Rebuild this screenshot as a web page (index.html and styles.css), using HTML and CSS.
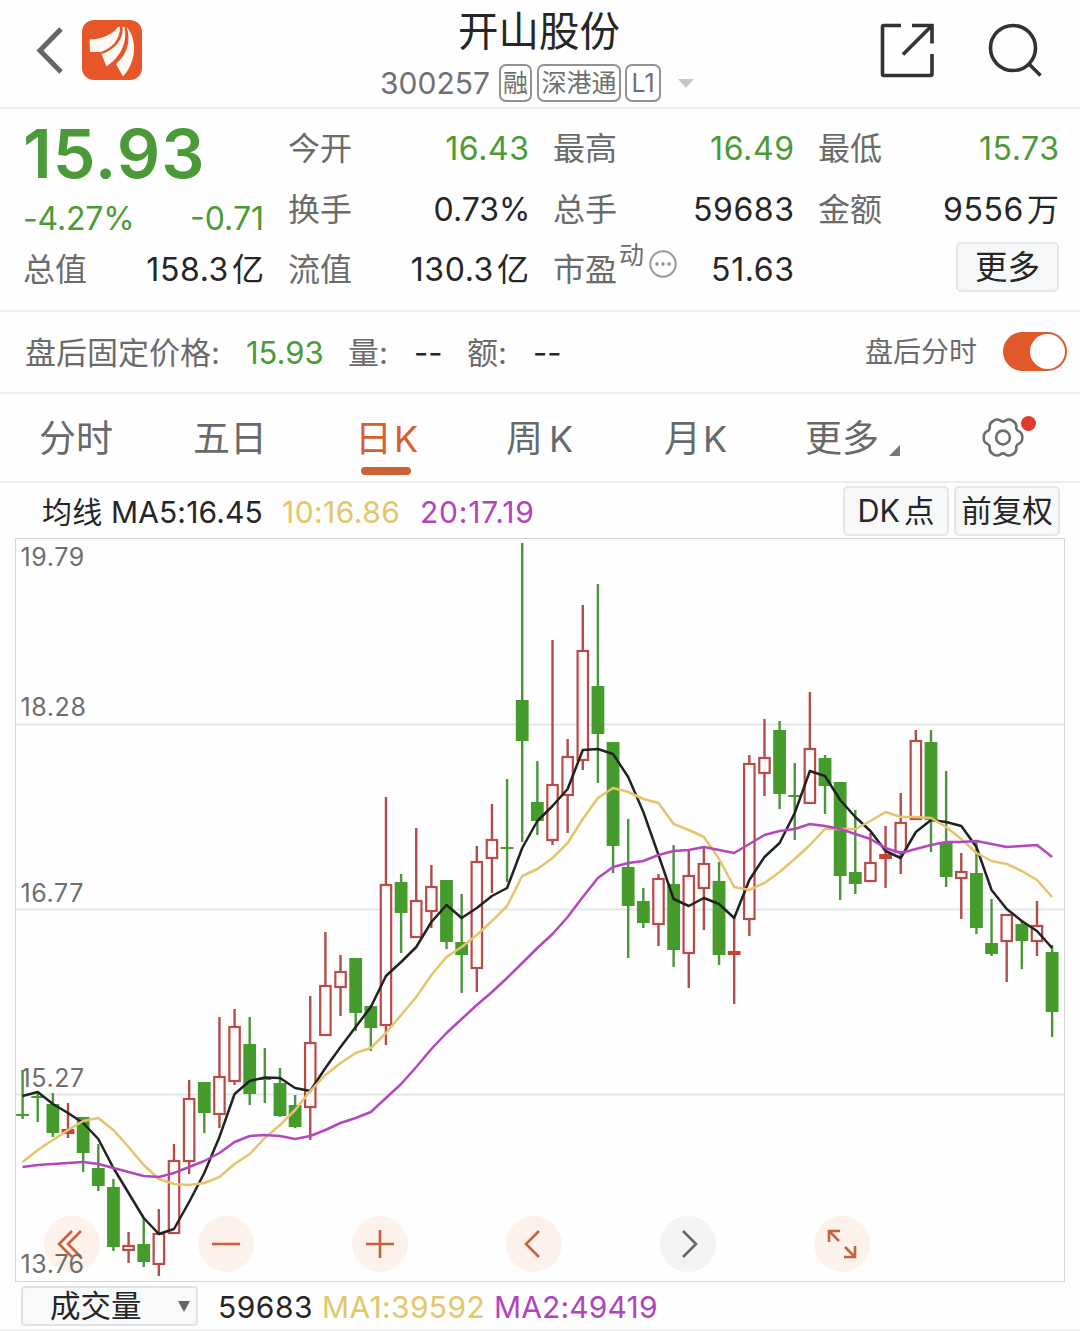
FILE: index.html
```html
<!DOCTYPE html>
<html lang="zh-CN">
<head>
<meta charset="utf-8">
<title>开山股份 300257</title>
<link rel="stylesheet" href="styles.css">
</head>
<body>
<header class="header">
  <div class="header-left">
    <svg class="back" width="30" height="50" viewBox="0 0 30 50"><path d="M27 4 6 25.500 27 47"/></svg>
    <svg class="logo" width="60" height="60" viewBox="0 0 60 60">
      <rect width="60" height="60" rx="12"/>
      <path d="M36 7C30 15 20 19 7.500 19.500L8 32H19C30 28 38 20 38 7Z"/>
      <path d="M40.500 6.500C42 19 33 30 19.500 34L24.500 46.500C37 38 46 24 42.500 7Z"/>
      <path d="M44.500 6.500C49 20 46 34 34 44L41 56.500C53 44 57 22 44.500 6.500Z"/>
    </svg>
  </div>
  <div class="heading">
    <h1 class="name">开山股份</h1>
    <div class="code-row">
      <span class="code">300257</span>
      <span class="tag tag-margin">融</span>
      <span class="tag tag-connect">深港通</span>
      <span class="tag tag-level">L1</span>
      <span class="caret"></span>
    </div>
  </div>
  <div class="header-right">
    <svg class="line-icon" width="56" height="56" viewBox="0 0 56 56"><path d="M22 3.500H5Q3.500 3.500 3.500 5V52Q3.500 53.500 5 53.500H51.500Q53 53.500 53 52V32M33 3.500H53V21.500M24 32.500 52.500 4"/></svg>
    <svg class="line-icon" width="56" height="56" viewBox="0 0 56 56"><circle cx="26" cy="26" r="22.500"/><path d="M42 42 53.500 53.500"/></svg>
  </div>
</header>

<section class="quote">
  <div class="col col-price">
    <div class="price down">15.93</div>
    <div class="pair change down"><span>-4.27%</span><span>-0.71</span></div>
    <div class="pair"><span class="label">总值</span><span class="value with-unit">158.3<i>亿</i></span></div>
  </div>
  <div class="col">
    <div class="pair"><span class="label">今开</span><span class="value down">16.43</span></div>
    <div class="pair"><span class="label">换手</span><span class="value percent">0.73%</span></div>
    <div class="pair"><span class="label">流值</span><span class="value with-unit">130.3<i>亿</i></span></div>
  </div>
  <div class="col">
    <div class="pair"><span class="label">最高</span><span class="value down">16.49</span></div>
    <div class="pair"><span class="label">总手</span><span class="value">59683</span></div>
    <div class="pair"><span class="label pe">市盈<sup>动</sup><svg width="28" height="28" viewBox="0 0 28 28"><circle class="ring" cx="14" cy="14" r="12.700"/><circle cx="8" cy="14" r="1.700"/><circle cx="14" cy="14" r="1.700"/><circle cx="20" cy="14" r="1.700"/></svg></span><span class="value">51.63</span></div>
  </div>
  <div class="col">
    <div class="pair"><span class="label">最低</span><span class="value down">15.73</span></div>
    <div class="pair"><span class="label">金额</span><span class="value with-unit">9556<i>万</i></span></div>
    <div class="pair more"><button class="btn btn-more">更多</button></div>
  </div>
</section>

<section class="after">
  <span class="after-title">盘后固定价格:</span>
  <span class="after-price down">15.93</span>
  <span class="after-key">量:</span><span class="dash">--</span>
  <span class="after-key">额:</span><span class="dash">--</span>
  <span class="after-chart">盘后分时</span>
  <span class="switch"><span class="knob"></span></span>
</section>

<nav class="tabs">
  <a class="tab">分时</a>
  <a class="tab">五日</a>
  <a class="tab active">日<b>K</b></a>
  <a class="tab tab-week">周<b>K</b></a>
  <a class="tab">月<b>K</b></a>
  <a class="tab tab-more">更多<span class="corner"></span></a>
  <span class="settings">
    <svg width="44" height="44" viewBox="-23 -22.500 46 46"><circle r="7.200"/><path d="M20.200 0Q20.200 5 16.800 6.400Q13.400 7.800 13.900 11.400Q14.400 15 10.100 17.500Q5.800 20 2.900 17.700Q0 15.500 -2.900 17.700Q-5.800 20 -10.100 17.500Q-14.400 15 -13.900 11.400Q-13.400 7.800 -16.800 6.400Q-20.200 5 -20.200 0Q-20.200 -5 -16.800 -6.400Q-13.400 -7.800 -13.900 -11.400Q-14.400 -15 -10.100 -17.500Q-5.800 -20 -2.900 -17.700Q0 -15.500 2.900 -17.700Q5.800 -20 10.100 -17.500Q14.400 -15 13.900 -11.400Q13.400 -7.800 16.800 -6.400Q20.200 -5 20.200 0Z"/></svg>
    <span class="dot"></span>
  </span>
</nav>

<section class="ma">
  <span class="ma5">均线 MA5:16.45</span>
  <span class="ma10">10:16.86</span>
  <span class="ma20">20:17.19</span>
  <button class="btn btn-dk">DK<i>点</i></button>
  <button class="btn btn-adjust">前复权</button>
</section>

<section class="chart">
  <svg class="plot" id="plot" width="1050" height="744" viewBox="15 538 1050 744">
    <g class="grid"><path d="M15 724.500H1065M15 909.500H1065M15 1094.500H1065"/></g>
    <g class="axis">
      <text x="20.500" y="566">19.79</text>
      <text x="20.500" y="716">18.28</text>
      <text x="20.500" y="901.500">16.77</text>
      <text x="20.500" y="1086.500">15.27</text>
    </g>
    <g id="candles"></g>
    <g id="averages"></g>
    <rect class="frame" x="15.500" y="538.500" width="1049" height="743"/>
  </svg>
  <div class="tools">
    <span class="tool"><svg viewBox="-28 -28 56 56"><path d="M0-13-13 0 0 13M9-13-4 0 9 13"/></svg></span>
    <span class="tool"><svg viewBox="-28 -28 56 56"><path d="M-14 0H14"/></svg></span>
    <span class="tool"><svg viewBox="-28 -28 56 56"><path d="M-14 0H14M0-14V14"/></svg></span>
    <span class="tool"><svg viewBox="-28 -28 56 56"><path d="M5-13-8 0 5 13"/></svg></span>
    <span class="tool disabled"><svg viewBox="-28 -28 56 56"><path d="M-5-13 8 0-5 13"/></svg></span>
    <span class="tool"><svg viewBox="-28 -28 56 56"><path d="M-13-2V-13H-2M-13-13-3-3M2 13H13V2M13 13 3 3"/></svg></span>
  </div>
  <span class="low-label">13.76</span>
</section>

<footer class="volume">
  <span class="select">成交量<span class="arrow"></span></span>
  <span class="vol">59683</span>
  <span class="vol-ma1">MA1:39592</span>
  <span class="vol-ma2">MA2:49419</span>
</footer>
<script src="chart.js"></script>
</body>
</html>
```

FILE: styles.css
```css
* { box-sizing: border-box; }
body {
  margin: 0;
  width: 1080px;
  height: 1331px;
  overflow: hidden;
  background: #fefefe;
  color: #262626;
  font-family: Inter, "Noto Sans CJK SC", sans-serif;
  font-size: 31px;
  line-height: 1;
  white-space: nowrap;
}
i, b { font-style: normal; font-weight: 400; }
svg { display: block; fill: none; }
button { font: inherit; color: inherit; }
.down { color: #4b9a37; }

.header {
  display: grid;
  grid-template-columns: 380px 1fr 200px;
  height: 109px;
  border-bottom: 2px solid #efefef;
}
.header-left { display: flex; align-items: flex-start; padding: 20px 0 0 34px; }
.back { margin: 5px 18px 0 0; stroke: #666; stroke-width: 5; }
.logo rect { fill: #e65628; }
.logo path { fill: #fff8f3; }
.name { margin: 12px 0 0 78px; font-size: 40.500px; font-weight: 400; line-height: 40px; }
.code-row { display: flex; align-items: center; height: 38px; margin-top: 12px; color: #707070; }
.code { width: 119px; font-size: 30px; }
.tag {
  display: flex;
  align-items: center;
  justify-content: center;
  height: 38px;
  padding-top: 1px;
  border: 2px solid #929292;
  border-radius: 7px;
  font-size: 25px;
}
.tag-margin { width: 33px; margin-right: 5px; }
.tag-connect { width: 84px; margin-right: 4px; }
.tag-level { width: 36px; margin-right: 17px; }
.caret { border: 8.500px solid transparent; border-top: 9px solid #c6c6c6; border-bottom: 0; }
.header-right { display: flex; gap: 52px; padding: 22px 0 0 0; margin-left: -1px; }
.line-icon { stroke: #333; stroke-width: 3.600; }

.quote {
  display: grid;
  grid-template-columns: repeat(4, 240px);
  gap: 25px;
  height: 203px;
  padding: 10px 22px 0 24px;
  border-bottom: 2px solid #f1f1f1;
}
.pair { display: flex; justify-content: space-between; align-items: center; height: 60.500px; }
.label { margin-left: -1px; color: #6b6b6b; font-size: 32px; }
.value, .change { font-size: 32px; }
.value { margin-right: -0.600px; letter-spacing: 0.600px; }
.value i { margin-left: 3px; letter-spacing: 0; }
.with-unit { margin-right: 0; }
.percent { margin-right: -1.500px; letter-spacing: 0; }
.price { height: 68px; margin-left: -1px; font-size: 68px; font-weight: 640; line-height: 69px; letter-spacing: 1px; }
.col-price .change { height: 62px; padding-top: 1px; }
.change span:first-child { margin-left: -1px; letter-spacing: -0.200px; }
.col-price .pair:last-child { height: 42px; }
.pe { display: flex; align-items: center; }
.pe sup { margin: -30px 0 0 2px; font-size: 25px; line-height: 25px; }
.pe svg { margin: -12px 0 0 5px; fill: #8b8b8b; }
.pe .ring { fill: none; stroke: #999; stroke-width: 2; }
.more { justify-content: flex-end; }
.btn {
  padding: 0;
  border: 2px solid #e3e6e8;
  border-radius: 5px;
  background: #f6f8fa;
}
.btn-more { width: 103px; height: 50px; margin-top: -6px; padding-top: 1px; font-size: 32.500px; }

.after {
  display: flex;
  align-items: center;
  height: 82px;
  padding-left: 25px;
  border-bottom: 2px solid #efefef;
  color: #6b6b6b;
}
.after-title { width: 221px; }
.after-price { width: 102px; color: #4b9a37; }
.after-key { width: 66px; }
.dash { width: 53px; color: #262626; }
.after-chart { width: 138px; margin-left: 279px; font-size: 28px; }
.switch { display: flex; justify-content: flex-end; width: 64px; height: 39px; margin-top: -1px; padding: 2px; border-radius: 20px; background: #e1592a; }
.knob { width: 35px; height: 35px; border-radius: 50%; background: #fff; }

.tabs {
  display: grid;
  grid-template-columns: 154px 162px 151px 158px 141px 175px 60px;
  align-items: center;
  height: 89px;
  padding-left: 39px;
  border-bottom: 2px solid #ececec;
  color: #696969;
  font-size: 37px;
}
.tab { display: flex; align-items: center; height: 87px; padding-top: 2px; }
.tab b { margin-left: 2px; font-size: 36px; }
.tab-week b { margin-left: 6px; }
.active { position: relative; color: #d5602f; }
.active::after { content: ""; position: absolute; left: 6px; bottom: 6px; width: 50px; height: 8px; border-radius: 4px; background: #cb6233; }
.corner { align-self: flex-end; margin: 0 0 25px 10px; border-left: 11px solid transparent; border-bottom: 11px solid #777; }
.settings { position: relative; }
.settings svg { margin-left: 1px; stroke: #6c6c6c; stroke-width: 2.700; }
.dot { position: absolute; left: 41px; top: 0; width: 15px; height: 15px; border-radius: 50%; background: #e23a2c; }

.ma { display: flex; align-items: center; height: 55px; padding-left: 42px; font-size: 30px; }
.ma5 { width: 240px; padding-top: 2px; letter-spacing: 0.150px; }
.ma10 { width: 138px; padding-top: 2px; color: #e2c767; letter-spacing: 0.450px; }
.ma20 { width: 423px; padding-top: 2px; color: #b243bd; letter-spacing: 0.800px; }
.ma .btn { width: 106px; height: 50px; padding-top: 1px; font-size: 30.500px; }
.btn-dk { margin-right: 5px; }
.btn-dk i { margin-left: 4px; }

.chart { position: relative; height: 744px; padding-left: 15px; }
.frame { stroke: #d5d5d5; }
.grid { stroke: #e4e6e6; stroke-width: 2; }
.axis text, .low-label { fill: #6e6e6e; color: #6e6e6e; font-size: 25px; letter-spacing: 0.600px; }
.low-label { position: absolute; left: 20.500px; bottom: 5px; }
.up-body { fill: #fffdfc; stroke: #b84b48; stroke-width: 2.200; }
.up-flat { fill: #c94238; }
.up-wick { stroke: #b04d4a; stroke-width: 2.400; }
.down-body { fill: #459c2d; }
.down-wick { stroke: #4a963b; stroke-width: 2.400; }
.line { stroke-width: 2.500; stroke-linejoin: round; }
.line-5 { stroke: #222; }
.line-10 { stroke: #e5c46b; }
.line-20 { stroke: #b446bf; }
.tools { position: absolute; left: 44px; top: 678px; display: flex; gap: 98px; }
.tool { width: 56px; height: 56px; border-radius: 50%; background: rgba(252, 228, 217, 0.500); }
.tool svg { stroke: #c8623a; stroke-width: 2.600; }
.disabled { background: #f3f3f3; }
.disabled svg { stroke: #666; }

.volume { display: flex; align-items: center; height: 49px; padding: 1px 0 0 21px; border-bottom: 2px solid #f4f1f1; font-size: 30px; }
.select {
  display: flex;
  align-items: center;
  justify-content: space-between;
  width: 177px;
  height: 40px;
  margin-right: 20px;
  padding: 1px 6px 0 27px;
  border: 2px solid #e0e3e5;
  border-radius: 4px;
  background: #f7f9fb;
  font-size: 30.500px;
}
.arrow { border: 6px solid transparent; border-top: 11px solid #666; border-bottom: 0; }
.vol { width: 104px; padding-top: 2px; letter-spacing: 0.500px; }
.vol-ma1 { width: 172px; padding-top: 2px; color: #e2c767; letter-spacing: 0.350px; }
.vol-ma2 { padding-top: 2px; color: #b243bd; letter-spacing: 0.150px; }
```

FILE: chart.js
```js
// Each candle: [direction, high, body top, body bottom, low]; u = up, f = up with a flat body, d = down
const candles = [
  ['d',1070,1114,1116,1119],['d',1093,1096,1098,1122],['d',1093,1104,1133,1137],['f',1103,1129,1134,1138],
  ['d',1117,1117,1153,1172],['d',1144,1168,1186,1191],['d',1179,1187,1247,1251],['u',1232,1245,1251,1263],
  ['d',1218,1244,1262,1267],['u',1209,1233,1265,1276],['u',1144,1160,1234,1234],['u',1080,1098,1162,1174],
  ['d',1082,1082,1113,1133],['u',1017,1076,1115,1128],['u',1009,1026,1082,1085],['d',1017,1044,1094,1105],
  ['d',1048,1078,1080,1103],['d',1068,1083,1116,1117],['d',1095,1105,1127,1128],['u',996,1042,1108,1140],
  ['u',932,985,1036,1036],['u',955,971,988,1016],['d',958,958,1013,1031],['d',1005,1006,1028,1051],
  ['u',797,884,1026,1045],['d',874,882,913,953],['u',828,900,938,938],['u',865,886,912,928],
  ['d',880,880,942,949],['d',894,942,955,993],['u',846,861,969,992],['u',804,839,859,893],
  ['d',779,847,849,882],['d',543,700,741,842],['d',761,802,821,835],['u',640,784,841,845],
  ['u',739,756,796,833],['u',605,650,761,770],['d',584,686,734,783],['d',742,742,846,873],
  ['d',819,867,906,958],['d',888,901,923,928],['u',874,878,925,946],['d',845,884,950,967],
  ['u',850,875,954,988],['u',847,863,889,930],['d',862,881,955,965],['f',917,951,955,1004],
  ['u',755,763,920,936],['u',719,757,774,796],['d',721,730,794,809],['d',763,795,797,840],
  ['u',692,748,804,804],['d',755,758,786,814],['d',782,782,876,900],['d',810,872,884,894],
  ['u',833,862,882,882],['f',826,854,859,888],['u',793,822,853,874],['u',730,740,820,820],
  ['d',730,742,820,852],['d',771,843,877,887],['u',853,871,879,919],['d',842,873,928,934],
  ['d',899,943,954,956],['u',914,914,942,982],['d',922,924,941,969],['u',901,925,942,956],
  ['d',945,952,1012,1037]
];
const averages = {
  'line-5': [1096,1092,1104,1113,1123,1139,1168,1193,1218,1234,1229,1202,1173,1137,1094,1081,1077.5,1078,1088,1091,1068,1047,1027,1007,976,962,947,922,905,918,908,896,888,848,821,806,789,750,749,754,777,812,855,899,906,898,904,918,880,857,843,813,771,776,800,817,831,851,858,832,820,822,826,847,890,909,921,931,948],
  'line-10': [1162,1150,1140,1130,1121,1118,1130,1147,1165,1179,1184,1185,1183,1177,1164,1154,1138,1125,1110,1091,1075,1063,1053,1048,1033,1015,997,975,957,947,935,921,906,876,869,858,843,819,798,788,792,799,803,824,830,837,859,887,890,883,872,859,845,829,829,829,821,812,817,817,818,827,839,853,861,864,871,880,897],
  'line-20': [1167,1165,1164,1163,1162,1164,1168,1172,1176,1177,1173,1167,1161,1153,1142,1136,1135,1136,1139,1136,1130,1123,1118,1112,1098,1084,1067,1049,1033,1019,1005,992,978,963,948,934,917,897,878,867,863,861,855,851,850,847,850,853,844,835,831,829,824,826,829,834,839,848,853,849,845,842,842,841,844,847,846,845,857]
};
const x = i => 22.6 + i * 15.14;
const NS = 'http://www.w3.org/2000/svg';
function add(parent, name, attrs) {
  const el = document.createElementNS(NS, name);
  for (const key in attrs) el.setAttribute(key, attrs[key]);
  document.getElementById(parent).appendChild(el);
}
candles.forEach(([kind, high, top, bottom, low], i) => {
  const cx = x(i);
  const side = kind === 'd' ? 'down' : 'up';
  add('candles', 'path', { class: side + '-wick', d: `M${cx} ${high}V${top}M${cx} ${bottom}V${low}` });
  if (kind === 'u') {
    add('candles', 'rect', { class: 'up-body', x: cx - 5.2, y: top + 1, width: 10.4, height: bottom - top - 2 });
  } else {
    add('candles', 'rect', { class: kind === 'f' ? 'up-flat' : 'down-body', x: cx - 6.4, y: top, width: 12.8, height: bottom - top });
  }
});
for (const name in averages) {
  add('averages', 'polyline', { class: 'line ' + name, points: averages[name].map((y, i) => x(i) + ',' + y).join(' ') });
}
```
